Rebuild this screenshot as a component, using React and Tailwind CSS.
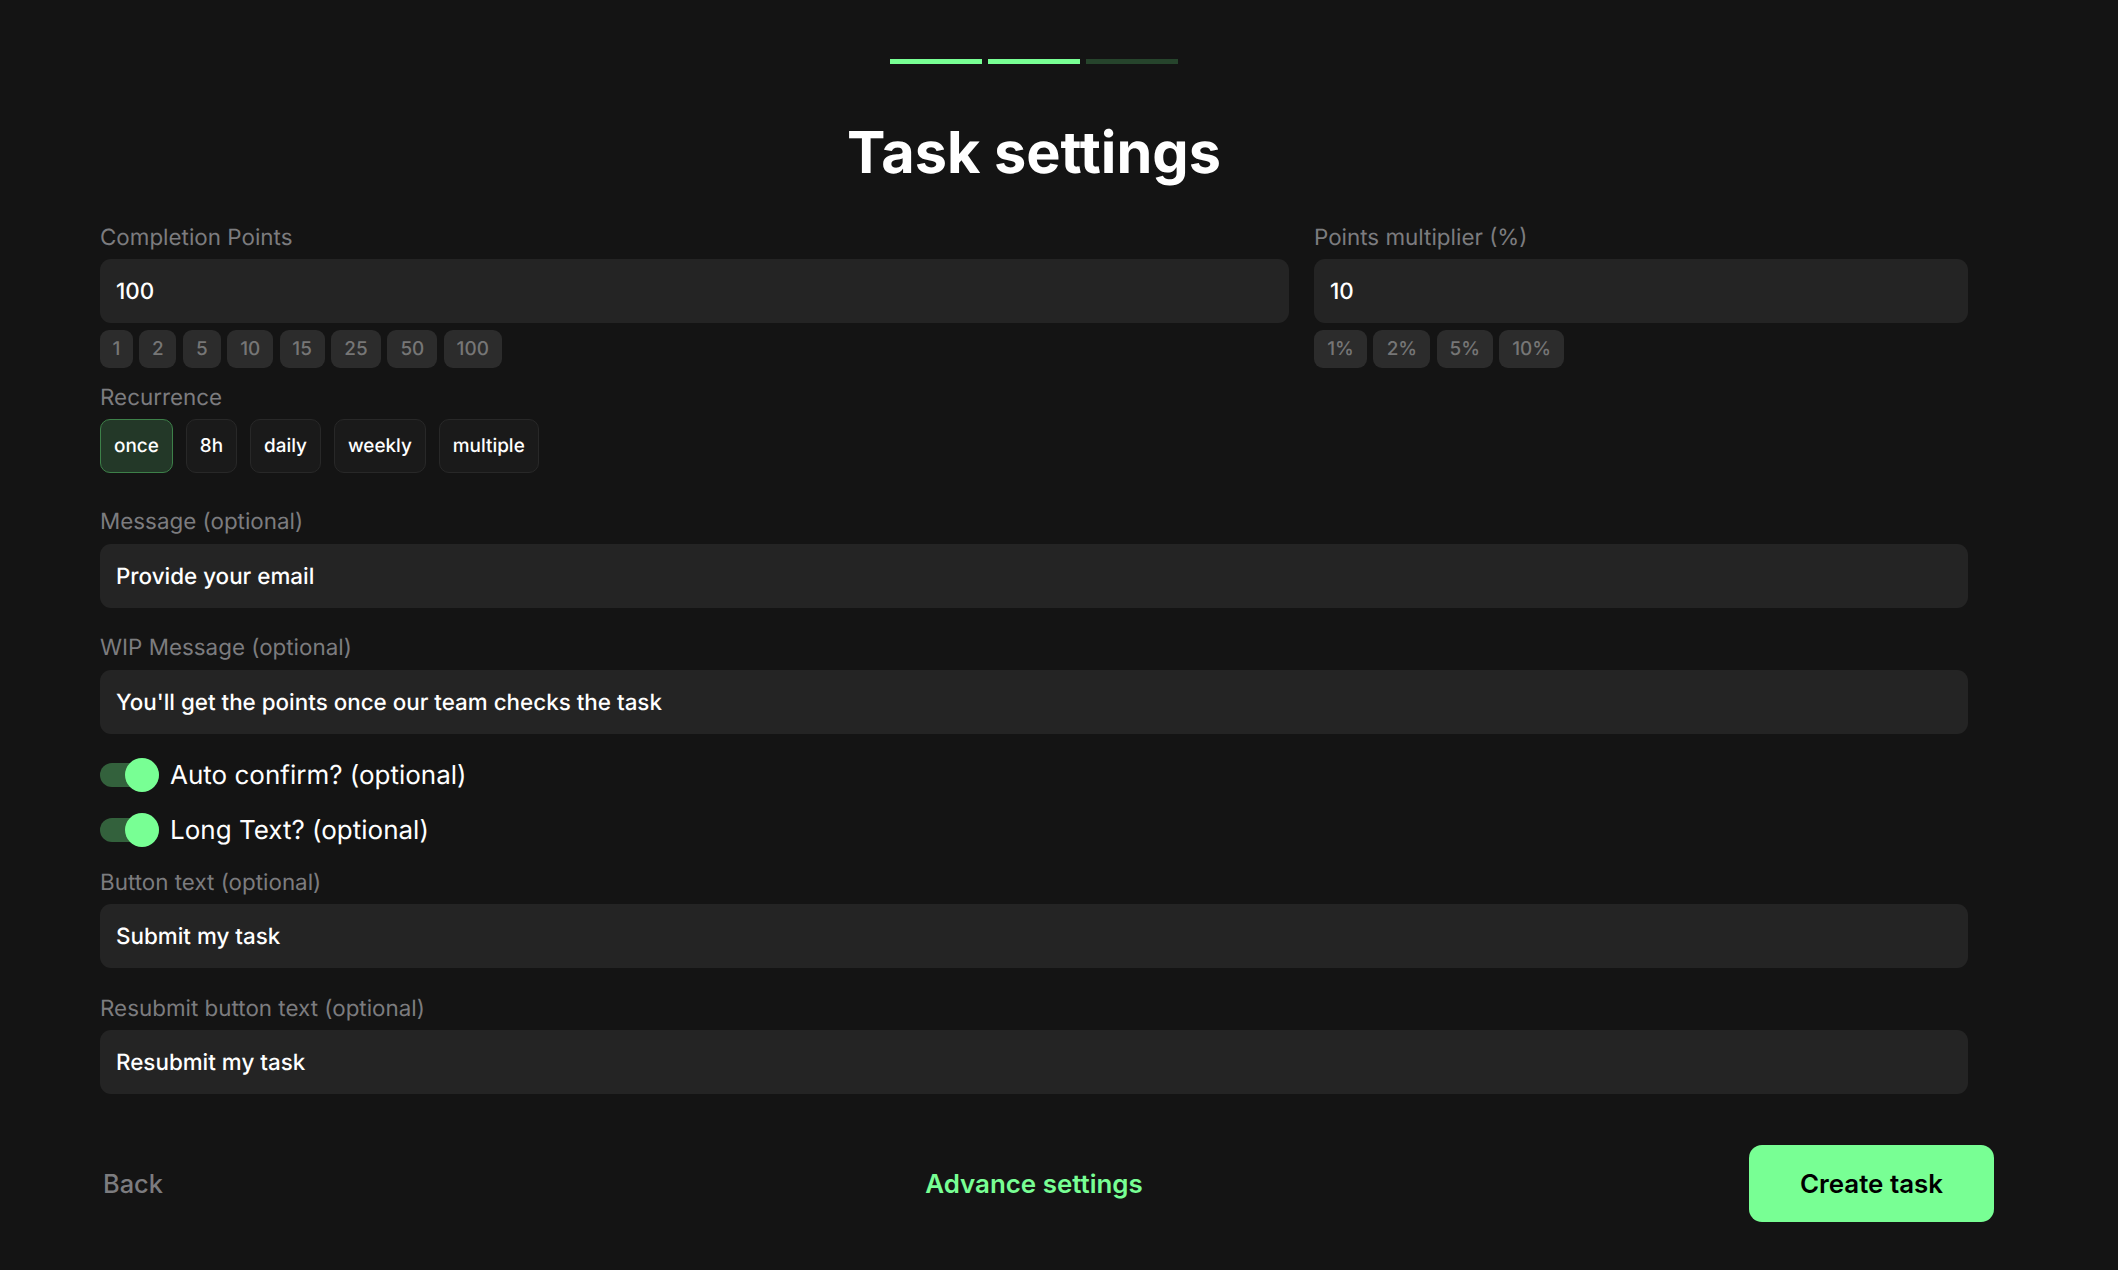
import React from 'react';

const pointChips = [
    { label: '1', w: 'w-[33px]' },
    { label: '2', w: 'w-[37px]' },
    { label: '5', w: 'w-[38px]' },
    { label: '10', w: 'w-[46px]' },
    { label: '15', w: 'w-[45px]' },
    { label: '25', w: 'w-[50px]' },
    { label: '50', w: 'w-[50px]' },
    { label: '100', w: 'w-[58px]' },
];

const multiplierChips = [
    { label: '1%', w: 'w-[53px]' },
    { label: '2%', w: 'w-[57px]' },
    { label: '5%', w: 'w-[56px]' },
    { label: '10%', w: 'w-[65px]' },
];

const recurrence = ['once', '8h', 'daily', 'weekly', 'multiple'];

const Label = ({ children }) => (
    <div className="h-[32px] pt-[1px] text-[22.4px] leading-[32px] text-[#7c7c7f]">{children}</div>
);

const Field = ({ gap, children }) => (
    <div className={`${gap} h-[64px] flex items-center px-[16px] pt-[2px] rounded-[11px] bg-[#242424] text-[22.4px] font-medium text-white`}>
        {children}
    </div>
);

const Chips = ({ items }) => (
    <div className="mt-[7px] flex gap-[6.4px]">
        {items.map((c) => (
            <div key={c.label} className={`${c.w} h-[38px] flex items-center justify-center rounded-[9px] bg-[#2c2c2c] text-[18.9px] font-medium text-[#767676]`}>
                {c.label}
            </div>
        ))}
    </div>
);

const Toggle = ({ children }) => (
    <div className="h-[34px] flex items-center gap-[11px]">
        <div className="relative w-[59px] h-[24px] rounded-full bg-[#33613c]">
            <div className="absolute right-0 top-[-5px] w-[34px] h-[34px] rounded-full bg-[#78ff94]" />
        </div>
        <span className="text-[26px] text-white">{children}</span>
    </div>
);

export default function App() {
    return (
        <div className="min-h-[1270px] bg-[#141414] font-['Inter',sans-serif] [text-rendering:geometricPrecision] pl-[100px] pr-[124px] pt-[59px]">
            <div className="w-[1868px]">
                <div className="flex justify-center gap-[6px]">
                    <div className="w-[92px] h-[5px] bg-[#78ff94]" />
                    <div className="w-[92px] h-[5px] bg-[#78ff94]" />
                    <div className="w-[92px] h-[5px] bg-[#26442c]" />
                </div>

                <h1 className="mt-[52px] text-center text-[57.6px] leading-[72px] font-bold text-white">Task settings</h1>

                <div className="mt-[33px] flex gap-[25px]">
                    <div className="w-[1189px]">
                        <Label>Completion Points</Label>
                        <Field gap="mt-[6px]">100</Field>
                        <Chips items={pointChips} />
                    </div>
                    <div className="flex-1">
                        <Label>Points multiplier (%)</Label>
                        <Field gap="mt-[6px]">10</Field>
                        <Chips items={multiplierChips} />
                    </div>
                </div>

                <div className="mt-[13px]">
                    <Label>Recurrence</Label>
                    <div className="mt-[6px] flex gap-[13px]">
                        {recurrence.map((r) => (
                            <div
                                key={r}
                                className={r === 'once'
                                    ? 'h-[54px] px-[13px] flex items-center rounded-[10px] border border-[#3d8049] bg-[#233828] text-[18.9px] font-medium text-white'
                                    : 'h-[54px] px-[13px] flex items-center rounded-[10px] border border-[#282828] bg-[#1a1a1a] text-[18.9px] font-medium text-white'}
                            >
                                {r}
                            </div>
                        ))}
                    </div>
                </div>

                <div className="mt-[32px]">
                    <Label>Message (optional)</Label>
                    <Field gap="mt-[7px]">Provide your email</Field>
                </div>
                <div className="mt-[23px]">
                    <Label>WIP Message (optional)</Label>
                    <Field gap="mt-[7px]">You'll get the points once our team checks the task</Field>
                </div>

                <div className="mt-[24px] flex flex-col gap-[21px]">
                    <Toggle>Auto confirm? (optional)</Toggle>
                    <Toggle>Long Text? (optional)</Toggle>
                </div>

                <div className="mt-[19px]">
                    <Label>Button text (optional)</Label>
                    <Field gap="mt-[6px]">Submit my task</Field>
                </div>
                <div className="mt-[24px]">
                    <Label>Resubmit button text (optional)</Label>
                    <Field gap="mt-[6px]">Resubmit my task</Field>
                </div>
            </div>

            <div className="mt-[51px] w-[1894px] grid grid-cols-[825px_218px_1fr] items-center">
                <button className="text-left pl-[3px] pt-[2px] text-[25.4px] font-medium text-[#7c7c7f]">Back</button>
                <button className="text-center pt-[2px] whitespace-nowrap text-[25.9px] font-semibold text-[#78ff94]">Advance settings</button>
                <div className="flex justify-end">
                    <button className="w-[245px] h-[77px] pt-[2px] rounded-[13px] bg-[#78ff94] text-[25.9px] font-semibold text-black">Create task</button>
                </div>
            </div>
        </div>
    );
}
